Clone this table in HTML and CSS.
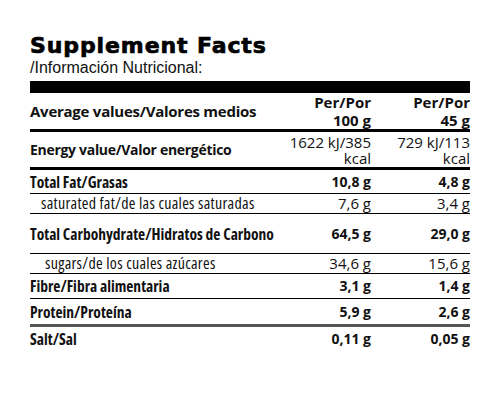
FILE: index.html
```html
<!DOCTYPE html>
<html lang="es">
<head>
<meta charset="utf-8">
<link rel="stylesheet" href="styles.css">
</head>
<body>
<div class="label">
  <h1 class="title">Supplement Facts</h1>
  <p class="subtitle">/Información Nutricional:</p>
  <div class="bar"></div>
  <div class="row head thick">
    <div class="name b wide">Average values/Valores medios</div>
    <div class="val b">Per/Por<br>100 g</div>
    <div class="val b">Per/Por<br>45 g</div>
  </div>
  <div class="row energy thick">
    <div class="name b mid">Energy value/Valor energético</div>
    <div class="val">1622 kJ/385<br>kcal</div>
    <div class="val">729 kJ/113<br>kcal</div>
  </div>
  <div class="row fat thin">
    <div class="name b">Total Fat/Grasas</div>
    <div class="val b">10,8 g</div>
    <div class="val b">4,8 g</div>
  </div>
  <div class="row sub thin">
    <div class="name reg sat">saturated fat/de las cuales saturadas</div>
    <div class="val">7,6 g</div>
    <div class="val">3,4 g</div>
  </div>
  <div class="row carb thin">
    <div class="name b">Total Carbohydrate/Hidratos de Carbono</div>
    <div class="val b">64,5 g</div>
    <div class="val b">29,0 g</div>
  </div>
  <div class="row sub thin">
    <div class="name reg sug">sugars/de los cuales azúcares</div>
    <div class="val">34,6 g</div>
    <div class="val">15,6 g</div>
  </div>
  <div class="row fibre thin">
    <div class="name b">Fibre/Fibra alimentaria</div>
    <div class="val b">3,1 g</div>
    <div class="val b">1,4 g</div>
  </div>
  <div class="row protein grey">
    <div class="name b">Protein/Proteína</div>
    <div class="val b">5,9 g</div>
    <div class="val b">2,6 g</div>
  </div>
  <div class="row salt">
    <div class="name b">Salt/Sal</div>
    <div class="val b">0,11 g</div>
    <div class="val b">0,05 g</div>
  </div>
</div>
</body>
</html>
```

FILE: styles.css
```css
html, body {
  margin: 0;
  padding: 0;
  background: #fff;
}
.label {
  width: 440px;
  margin-left: 30px;
  padding-top: 32px;
  color: #111;
  font-family: "Open Sans", "DejaVu Sans Condensed", sans-serif;
  font-size: 15px;
}
.title {
  margin: 0;
  font-family: "DejaVu Sans", "Liberation Sans", sans-serif;
  font-weight: bold;
  font-size: 22px;
  line-height: 28px;
  letter-spacing: 0.9px;
  color: #000;
  -webkit-text-stroke: 0.7px #000;
}
.subtitle {
  margin: 0;
  font-family: "Liberation Sans", sans-serif;
  font-size: 16px;
  line-height: 16px;
}
.bar {
  margin-top: 5px;
  height: 12px;
  background: #000;
}
.row {
  display: grid;
  grid-template-columns: 1fr 91px 99px;
  align-items: center;
}
.thick { border-bottom: 3px solid #000; }
.thin { border-bottom: 1px solid #000; }
.grey { border-bottom: 3px solid #555; }
.head { height: 36px; }
.energy { height: 35px; }
.fat { height: 23px; }
.sub { height: 19px; }
.carb { height: 39px; }
.fibre { height: 24px; }
.protein { height: 25px; }
.salt { height: 23px; }
.name {
  font-stretch: 75%;
  font-size: 15.5px;
  white-space: nowrap;
}
.name.wide {
  font-size: 15px;
  font-stretch: 100%;
  letter-spacing: -0.25px;
}
.name.mid {
  font-stretch: 100%;
  font-size: 14px;
  letter-spacing: -0.3px;
}
.name.reg {
  font-size: 16px;
  letter-spacing: 0.3px;
}
.val {
  text-align: right;
  line-height: 16px;
  font-stretch: 100%;
}
.val.b { font-size: 14px; }
.head .val.b {
  font-size: 15px;
  line-height: 18px;
}
.sub .name, .sub .val {
  line-height: 18px;
  margin-top: -1px;
}
.b { font-weight: bold; }
.sat { padding-left: 11px; }
.sug { padding-left: 15px; letter-spacing: 0.6px; }
```
